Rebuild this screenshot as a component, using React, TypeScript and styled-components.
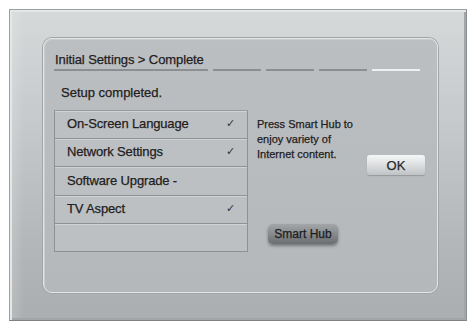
import React from 'react';
import styled, { createGlobalStyle } from 'styled-components';

const GlobalStyle = createGlobalStyle`
  html, body {
    margin: 0;
    padding: 0;
    background: #ffffff;
  }
  body {
    font-family: "Liberation Sans", Arial, sans-serif;
    color: #1f2021;
    -webkit-text-stroke: 0.25px #1f2021;
  }
`;

type Item = { label: string; done: boolean };

const items: Item[] = [
  { label: 'On-Screen Language', done: true },
  { label: 'Network Settings', done: true },
  { label: 'Software Upgrade -', done: false },
  { label: 'TV Aspect', done: true },
  { label: '', done: false },
];

const App: React.FC = () => {
  return (
    <>
      <GlobalStyle />
      <Screen>
        <OuterPanel>
          <InnerPanel>
            <Header>
              <Title>Initial Settings &gt; Complete</Title>
              <Step />
              <Step />
              <Step />
              <Step $current />
            </Header>
            <Status>Setup completed.</Status>
            <Body>
              <List>
                {items.map((item, i) => (
                  <Row key={i} $last={i === items.length - 1}>
                    <span>{item.label}</span>
                    {item.done && <Check>✓</Check>}
                  </Row>
                ))}
              </List>
              <Side>
                <Hint>
                  Press Smart Hub to
                  <br />
                  enjoy variety of
                  <br />
                  Internet content.
                </Hint>
                <HubButton>Smart Hub</HubButton>
              </Side>
              <OkButton>OK</OkButton>
            </Body>
          </InnerPanel>
        </OuterPanel>
      </Screen>
    </>
  );
};

export default App;

const Screen = styled.div`
  width: 471px;
  height: 323px;
  padding: 9px 4px 2px 9px;
  box-sizing: border-box;
`;

const OuterPanel = styled.div`
  box-sizing: border-box;
  width: 458px;
  height: 312px;
  padding: 28px 30px 29px 33px;
  background:
    linear-gradient(90deg, rgba(255, 255, 255, 0.18) 0px, rgba(255, 255, 255, 0) 14px),
    linear-gradient(180deg, #d6d9da 0%, #c7cacc 35%, #b4b7b9 75%, #abaeb0 100%);
  border: 1px solid #9ea1a3;
  border-right-color: #8d9092;
  border-bottom-color: #7f8284;
  box-shadow: inset 2px 2px 0 #e4e6e7, inset -2px -2px 0 #a3a6a8;
`;

const InnerPanel = styled.div`
  box-sizing: border-box;
  width: 395px;
  height: 255px;
  padding: 11px 10px 0 10px;
  border-radius: 9px;
  background: linear-gradient(180deg, #bcbfc1 0%, #b5b8ba 100%);
  border: 1px solid #e2e4e5;
  box-shadow: 0 0 0 1px #a2a5a7, inset 1px 1px 0 #c9cbcd;
`;

const Header = styled.div`
  display: flex;
  align-items: flex-end;
  gap: 5px;
`;

const Title = styled.div`
  width: 153px;
  font-size: 13px;
  line-height: 19px;
  padding-left: 1px;
  letter-spacing: -0.1px;
  border-bottom: 2px solid #8c8f91;
  white-space: nowrap;
`;

const Step = styled.div<{ $current?: boolean }>`
  width: 48px;
  height: 2px;
  background: ${p => (p.$current ? '#eef0f1' : '#8c8f91')};
`;

const Status = styled.div`
  margin-top: 14px;
  padding-left: 7px;
  font-size: 13px;
  line-height: 16px;
`;

const Body = styled.div`
  display: flex;
  margin-top: 9px;
`;

const List = styled.div`
  box-sizing: border-box;
  width: 194px;
  height: 142px;
  border: 1px solid #8e9193;
  border-top-color: #999c9e;
  display: flex;
  flex-direction: column;
`;

const Row = styled.div<{ $last?: boolean }>`
  flex: 1;
  display: flex;
  align-items: center;
  justify-content: space-between;
  padding: 0 12px 3px 12px;
  font-size: 13px;
  letter-spacing: -0.15px;
  background: #bdc0c2;
  border-top: 1px solid #d0d2d4;
  border-bottom: ${p => (p.$last ? 'none' : '1px solid #8f9294')};
`;

const Check = styled.span`
  font-family: "DejaVu Sans", sans-serif;
  font-size: 11px;
  color: #333;
  -webkit-text-stroke: 0;
`;

const Side = styled.div`
  width: 110px;
  margin-left: 9px;
  padding-top: 7px;
  display: flex;
  flex-direction: column;
  align-items: flex-start;
`;

const Hint = styled.div`
  font-size: 11px;
  line-height: 15px;
`;

const HubButton = styled.div`
  margin-top: 62px;
  margin-left: 11px;
  width: 70px;
  height: 20px;
  border-radius: 5px;
  display: flex;
  align-items: center;
  justify-content: center;
  font-size: 12px;
  color: #1a1b1c;
  background: linear-gradient(180deg, #a3a6a8 0%, #85888b 55%, #6b6e71 100%);
  box-shadow: 0 2px 3px rgba(40, 40, 40, 0.45);
`;

const OkButton = styled.div`
  margin-top: 45px;
  width: 58px;
  height: 20px;
  border-radius: 3px;
  display: flex;
  align-items: center;
  justify-content: center;
  font-size: 13px;
  color: #2a2b2c;
  background: linear-gradient(180deg, #f6f7f7 0%, #dcdee0 50%, #c0c3c5 100%);
  box-shadow: 0 1px 1px rgba(90, 90, 90, 0.35);
`;
